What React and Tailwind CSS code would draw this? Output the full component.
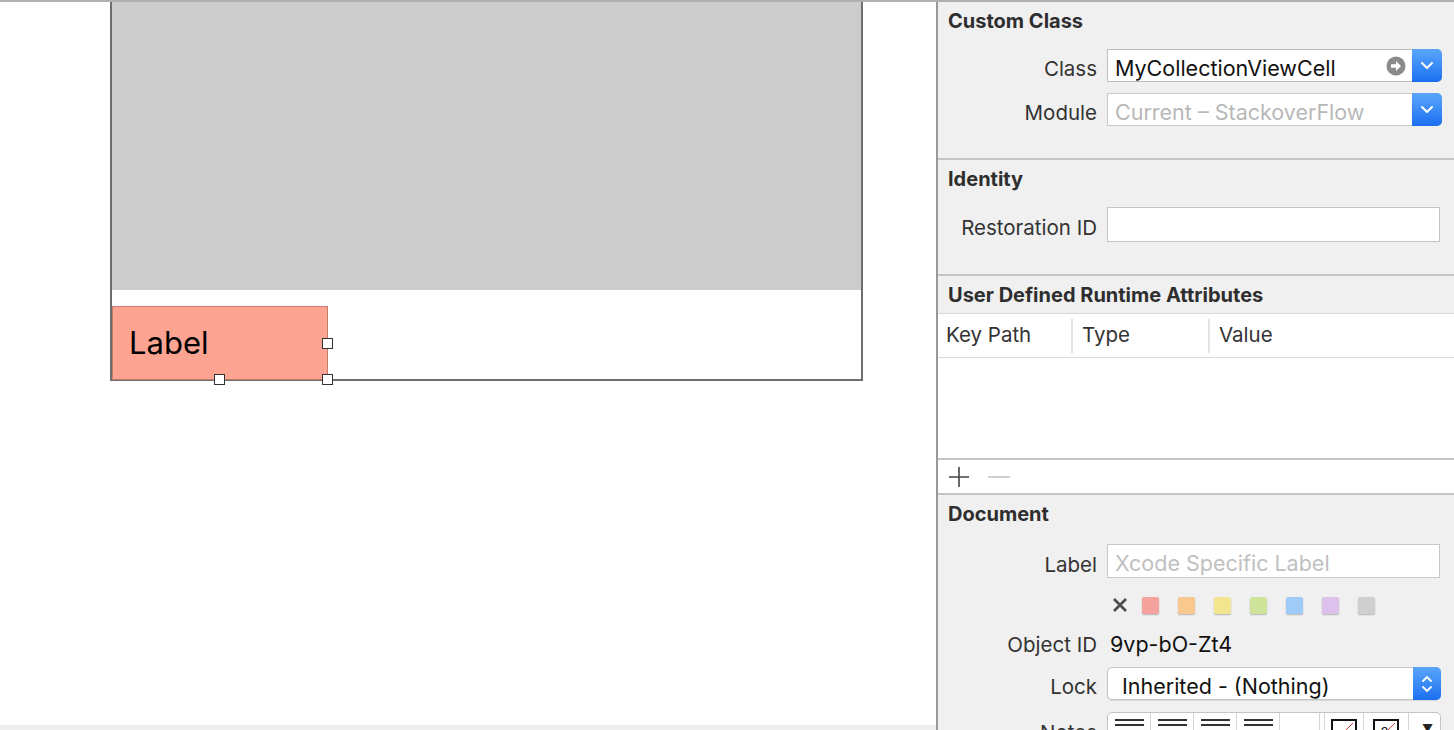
import React from 'react';

const Chevron = ({ className = '' }) => (
  <svg width="14" height="9" viewBox="0 0 14 9" className={className}>
    <path d="M2 2 L7 7 L12 2" fill="none" stroke="white" strokeWidth="2" strokeLinecap="round" strokeLinejoin="round" />
  </svg>
);

const BlueDrop = () => (
  <div className="w-[30px] -my-px -mr-px flex items-center justify-center bg-gradient-to-b from-[#5aa6fb] to-[#1a6ff0] rounded-r-[5px]">
    <Chevron />
  </div>
);

const Row = ({ label, children, className = '' }) => (
  <div className={`flex items-center shrink-0 ${className}`}>
    <div className="w-[169px] shrink-0 self-stretch flex items-center justify-end pr-[10px] pt-[6px] text-[20.5px] leading-[25px] text-[#333]">{label}</div>
    {children}
  </div>
);

const Heading = ({ children, className = '' }) => (
  <div className={`pl-[10px] text-[20px] leading-[26px] font-bold text-[#2e2e2e] ${className}`}>{children}</div>
);

const Sep = () => <div className="h-[2px] shrink-0 bg-[#c4c4c4]" />;

const swatches = ['#f6a29c', '#f8c88c', '#f4e690', '#d0e39b', '#9ecbf8', '#dcc1ec', '#cfcfcf'];

const Handle = ({ className }) => (
  <div className={`absolute w-[11px] h-[11px] bg-white border-[1.5px] border-[#333] ${className}`} />
);

export default function App() {
  return (
    <div className="w-[1454px] h-[730px] overflow-hidden bg-white font-['Inter',sans-serif]">
      <div className="h-[2px] bg-[#b0b0b0]" />
      <div className="flex h-[728px]">
        {/* Canvas */}
        <div className="w-[936px] shrink-0 flex flex-col">
          <div className="flex-1">
            <div className="ml-[110px] w-[753px] h-[379px] border-x-2 border-b-2 border-[#6e6e6e] flex flex-col">
              <div className="h-[288px] shrink-0 bg-[#cccccc]" />
              <div className="flex-1 pt-[16px]">
                <div className="relative w-[216px] h-[74px] bg-[#fca491] border border-[#c07c6f] flex items-center pl-[16px]">
                  <span className="text-[31px] text-black">Label</span>
                  <Handle className="right-[-6px] top-[31px]" />
                  <Handle className="left-[101px] bottom-[-6px]" />
                  <Handle className="right-[-6px] bottom-[-6px]" />
                </div>
              </div>
            </div>
          </div>
          <div className="h-[5px] shrink-0 bg-[#eeeeee]" />
        </div>

        {/* Inspector */}
        <div className="w-[518px] shrink-0 border-l-2 border-[#999] bg-[#f0f0f0] flex flex-col overflow-hidden">
          {/* Custom Class */}
          <div className="h-[156px] shrink-0 pt-[6px]">
            <Heading>Custom Class</Heading>
            <Row label="Class" className="mt-[15px]">
              <div className="w-[335px] h-[33px] flex bg-white border border-[#bdbdbd] rounded-r-[5px]">
                <div className="flex-1 flex items-center pl-[7px] pt-[5px] text-[21.5px] text-[#111]">MyCollectionViewCell</div>
                <div className="w-[32px] flex items-center justify-center">
                  <svg width="20" height="20" viewBox="0 0 20 20">
                    <circle cx="10" cy="10" r="9.5" fill="#8a8a8a" />
                    <path d="M5 8.3 H10 V5 L15 10 L10 15 V11.7 H5 Z" fill="white" />
                  </svg>
                </div>
                <BlueDrop />
              </div>
            </Row>
            <Row label="Module" className="mt-[11px]">
              <div className="w-[335px] h-[33px] flex bg-white border border-[#c8c8c8] rounded-r-[5px]">
                <div className="flex-1 flex items-center pl-[7px] pt-[5px] text-[21.5px] text-[#b8b8b8]">Current – StackoverFlow</div>
                <BlueDrop />
              </div>
            </Row>
          </div>
          <Sep />

          {/* Identity */}
          <div className="h-[114px] shrink-0 pt-[6px]">
            <Heading>Identity</Heading>
            <Row label="Restoration ID" className="mt-[15px]">
              <div className="w-[333px] h-[35px] bg-white border border-[#c4c4c4]" />
            </Row>
          </div>
          <Sep />

          {/* User Defined Runtime Attributes */}
          <div className="h-[37px] shrink-0 pt-[6px]">
            <Heading>User Defined Runtime Attributes</Heading>
          </div>
          <div className="h-[145px] shrink-0 bg-white border-t border-[#d8d8d8]">
            <div className="h-[44px] flex items-center border-b border-[#dcdcdc] text-[20.5px] text-[#333]">
              <div className="w-[135px] pl-[8px] h-[34px] flex items-center border-r-2 border-[#e2e2e2]">Key Path</div>
              <div className="w-[137px] pl-[9px] h-[34px] flex items-center border-r-2 border-[#e2e2e2]">Type</div>
              <div className="pl-[9px]">Value</div>
            </div>
          </div>
          <Sep />
          <div className="h-[33px] shrink-0 bg-white flex items-center pl-[10px] gap-[17px]">
            <svg width="22" height="22" viewBox="0 0 22 22">
              <path d="M11 1 V21 M1 11 H21" stroke="#444" strokeWidth="1.6" />
            </svg>
            <svg width="24" height="22" viewBox="0 0 24 22">
              <path d="M1 11 H23" stroke="#c4c4c4" strokeWidth="1.6" />
            </svg>
          </div>
          <Sep />

          {/* Document */}
          <div className="shrink-0 pt-[6px] flex flex-col">
            <Heading>Document</Heading>
            <Row label="Label" className="mt-[17px]">
              <div className="w-[333px] h-[34px] bg-white border border-[#c8c8c8] flex items-center pl-[7px] pt-[5px] text-[21.5px] text-[#c0c0c0]">Xcode Specific Label</div>
            </Row>
            <div className="flex items-center ml-[174px] mt-[16px] h-[22px] shrink-0">
              <svg width="16" height="16" viewBox="0 0 16 16">
                <path d="M2 2 L14 14 M14 2 L2 14" stroke="#4a4a4a" strokeWidth="2.6" />
              </svg>
              <div className="flex gap-[19px] ml-[14px]">
                {swatches.map((c) => (
                  <div key={c} className="w-[17px] h-[17px] rounded-[2px] shadow-[0_1px_1.5px_rgba(0,0,0,0.25)]" style={{ backgroundColor: c }} />
                ))}
              </div>
            </div>
            <Row label="Object ID" className="mt-[10px]">
              <div className="pl-[3px] pt-[6px] text-[21.5px] leading-[25px] text-[#111]">9vp-bO-Zt4</div>
            </Row>
            <Row label="Lock" className="mt-[10px]">
              <div className="w-[334px] h-[33px] flex bg-white border border-[#c4c4c4] rounded-[5px] shadow-[0_1px_1px_rgba(0,0,0,0.1)]">
                <div className="flex-1 flex items-center pl-[14px] pt-[5px] text-[21.5px] text-[#111]">Inherited - (Nothing)</div>
                <div className="w-[28px] -my-px -mr-px flex items-center justify-center bg-gradient-to-b from-[#5aa6fb] to-[#1a6ff0] rounded-r-[5px]">
                  <svg width="12" height="22" viewBox="0 0 12 22">
                    <path d="M2 8 L6 4 L10 8 M2 14 L6 18 L10 14" fill="none" stroke="white" strokeWidth="1.8" strokeLinecap="round" strokeLinejoin="round" />
                  </svg>
                </div>
              </div>
            </Row>
            <Row label="Notes" className="mt-[12px] items-start">
              <div className="w-[334px] h-[34px] flex bg-white border border-[#c4c4c4] rounded-[5px] overflow-hidden">
                {[0, 1, 2, 3].map((i) => (
                  <div key={i} className="w-[43px] border-r border-[#d4d4d4] flex flex-col items-center pt-[6px] gap-[3px]">
                    <div className="h-[2px] w-[29px] bg-[#333]" />
                    <div className="h-[2px] w-[29px] bg-[#333]" />
                  </div>
                ))}
                <div className="w-[40px] border-r border-[#d4d4d4]" />
                <div className="w-[5px] border-r border-[#d4d4d4]" />
                <div className="w-[39px] border-r border-[#d4d4d4] flex justify-center pt-[6px]">
                  <svg width="26" height="26" viewBox="0 0 26 26">
                    <rect x="1" y="1" width="24" height="24" fill="none" stroke="#111" strokeWidth="2" />
                    <path d="M6 20 L22 4" stroke="#e24040" strokeWidth="1" />
                  </svg>
                </div>
                <div className="w-[45px] border-r border-[#d4d4d4] flex justify-center pt-[6px]">
                  <svg width="26" height="26" viewBox="0 0 26 26">
                    <rect x="1" y="1" width="24" height="24" fill="none" stroke="#111" strokeWidth="2" />
                    <path d="M6 20 L22 4" stroke="#e24040" strokeWidth="1" />
                    <text x="8" y="19" fontSize="14" fill="#111">?</text>
                  </svg>
                </div>
                <div className="flex-1 flex justify-end pr-[7px] pt-[7px] text-[11px] text-[#222]">▼</div>
              </div>
            </Row>
          </div>
        </div>
      </div>
    </div>
  );
}
